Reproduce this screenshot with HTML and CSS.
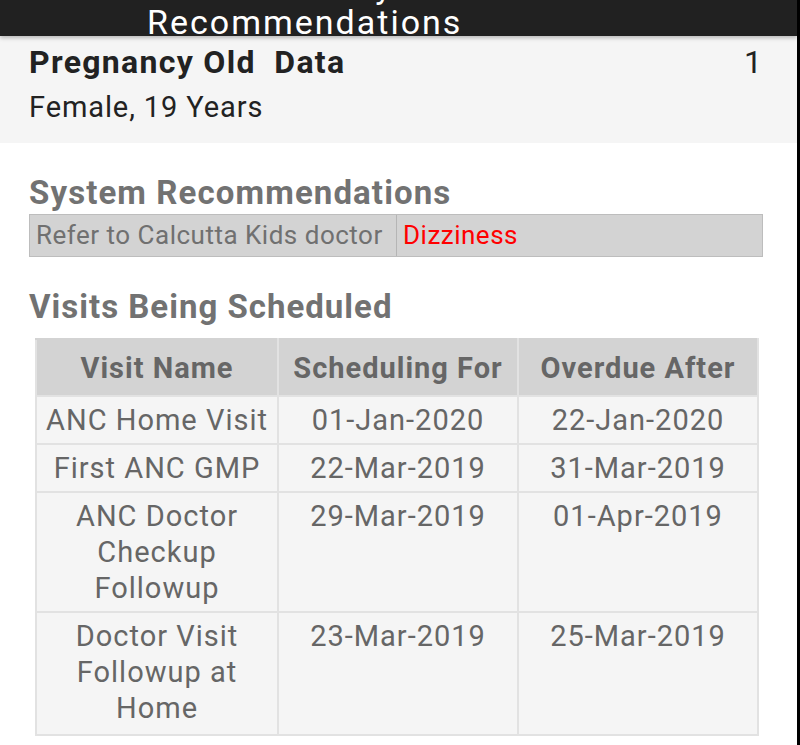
FILE: index.html
```html
<!DOCTYPE html>
<html>
<head>
<meta charset="utf-8">
<link rel="stylesheet" href="styles.css">
</head>
<body>
<div class="screen">
  <div class="appbar">
    <div class="title">
      <div class="title-line">Visit Summary</div>
      <div class="title-line">Recommendations</div>
    </div>
  </div>
  <div class="patient">
    <div class="patient-row">
      <span class="patient-name">Pregnancy Old&nbsp; Data</span>
      <span class="patient-count">1</span>
    </div>
    <div class="patient-sub">Female, 19 Years</div>
  </div>
  <div class="content">
    <h2 class="section-title sys-title">System Recommendations</h2>
    <div class="rec-row">
      <div class="rec-cell rec-text">Refer to Calcutta Kids doctor</div>
      <div class="rec-cell rec-reason">Dizziness</div>
    </div>
    <h2 class="section-title visits-title">Visits Being Scheduled</h2>
    <table class="visits">
      <colgroup><col class="c1"><col class="c2"><col class="c3"></colgroup>
      <thead>
        <tr><th>Visit Name</th><th>Scheduling For</th><th>Overdue After</th></tr>
      </thead>
      <tbody>
        <tr><td>ANC Home Visit</td><td>01-Jan-2020</td><td>22-Jan-2020</td></tr>
        <tr><td>First ANC GMP</td><td>22-Mar-2019</td><td>31-Mar-2019</td></tr>
        <tr><td>ANC Doctor<br>Checkup<br>Followup</td><td>29-Mar-2019</td><td>01-Apr-2019</td></tr>
        <tr class="last-row"><td>Doctor Visit<br>Followup at<br>Home</td><td>23-Mar-2019</td><td>25-Mar-2019</td></tr>
      </tbody>
    </table>
  </div>
</div>
</body>
</html>
```
FILE: styles.css
```css
html, body {
  margin: 0;
  padding: 0;
  background: #000;
}
body {
  font-family: Roboto, "Noto Sans", sans-serif;
  width: 800px;
  height: 745px;
  overflow: hidden;
}
.screen {
  width: 797px;
  height: 745px;
  background: #fff;
  overflow: hidden;
}
.appbar {
  height: 36px;
  background: #212121;
  overflow: hidden;
  position: relative;
  z-index: 1;
  box-shadow: 0 2px 4px rgba(0,0,0,0.25);
}
.title {
  padding-left: 147px;
  margin-top: -32px;
  color: #fff;
  font-size: 34px;
  line-height: 36px;
  letter-spacing: 2px;
  white-space: nowrap;
}
.patient {
  background: #f5f5f5;
  height: 107px;
  padding: 0 35px 0 29px;
  box-sizing: border-box;
  color: #222;
}
.patient-row {
  display: flex;
  justify-content: space-between;
  align-items: baseline;
  padding-top: 6px;
}
.patient-name {
  font-weight: 700;
  font-size: 32px;
  line-height: 40px;
  letter-spacing: 1.3px;
}
.patient-count {
  font-size: 32px;
  line-height: 40px;
}
.patient-sub {
  font-size: 29px;
  line-height: 40px;
  letter-spacing: 0.9px;
  margin-top: 5px;
}
.content {
  padding: 30px 34px 0 29px;
}
.section-title {
  margin: 0;
  color: #727272;
  font-weight: 700;
  font-size: 33px;
  line-height: 40px;
}
.sys-title {
  letter-spacing: 1.1px;
}
.rec-row {
  display: flex;
  margin-top: 1px;
  height: 43px;
  box-sizing: border-box;
  border: 1px solid #bdbdbd;
  background: #d3d3d3;
}
.rec-cell {
  font-size: 26px;
  line-height: 41px;
  padding: 0 6px;
  letter-spacing: 0.5px;
}
.rec-text {
  width: 367px;
  box-sizing: border-box;
  color: #707070;
  border-right: 1px solid #b5b5b5;
}
.rec-reason {
  color: #ff0000;
}
.visits-title {
  margin-top: 30px;
  letter-spacing: 1px;
}
.visits {
  margin: 11px 0 0 6px;
  border-collapse: collapse;
  table-layout: fixed;
  width: 722px;
  color: #666;
}
.visits .c1 { width: 242px; }
.visits .c2 { width: 240px; }
.visits .c3 { width: 240px; }
.visits th, .visits td {
  border: 2px solid #e2e2e2;
  text-align: center;
  vertical-align: top;
  font-size: 29px;
  line-height: 36px;
  letter-spacing: 1px;
  padding: 5px 0;
}
.visits th {
  background: #d3d3d3;
  font-weight: 700;
  padding: 10px 0 9px;
  border-color: #d3d3d3 #e2e2e2 #e2e2e2;
  color: #666;
}
.visits td {
  background: #f5f5f5;
}
.visits .last-row td {
  padding-bottom: 8px;
}
```
